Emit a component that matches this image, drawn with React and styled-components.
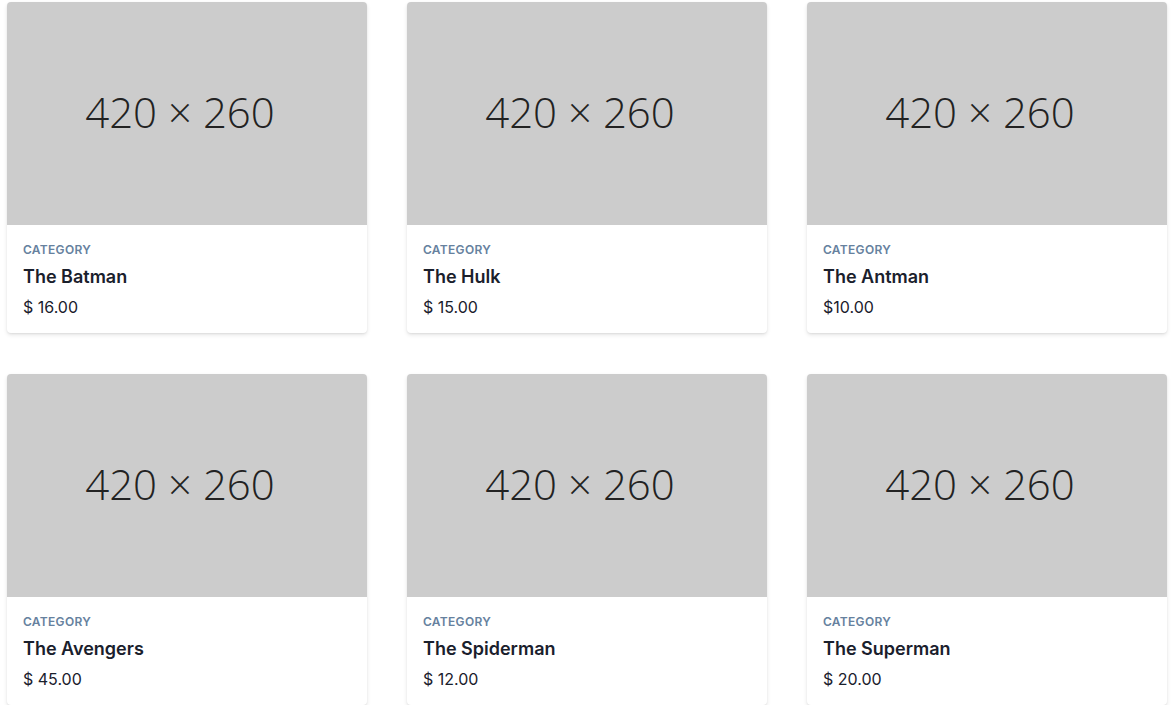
import React from 'react';
import styled, { createGlobalStyle } from 'styled-components';

const products = [
  { id: 1, name: 'The Batman', price: '$ 16.00' },
  { id: 2, name: 'The Hulk', price: '$ 15.00' },
  { id: 3, name: 'The Antman', price: '$10.00' },
  { id: 4, name: 'The Avengers', price: '$ 45.00' },
  { id: 5, name: 'The Spiderman', price: '$ 12.00' },
  { id: 6, name: 'The Superman', price: '$ 20.00' },
];

const App = () => {
  return (
    <>
      <GlobalStyle />
      <Grid>
        {products.map((product) => (
          <Card key={product.id}>
            <Placeholder>
              <PlaceholderText>420 × 260</PlaceholderText>
            </Placeholder>
            <Body>
              <Category>CATEGORY</Category>
              <Title>{product.name}</Title>
              <Price>{product.price}</Price>
            </Body>
          </Card>
        ))}
      </Grid>
    </>
  );
};

const GlobalStyle = createGlobalStyle`
  *, *::before, *::after {
    box-sizing: border-box;
  }
  body {
    margin: 0;
    background: #ffffff;
    font-family: Inter, "Liberation Sans", sans-serif;
    color: #1a202c;
  }
`;

const Grid = styled.div`
  display: grid;
  grid-template-columns: repeat(3, 360px);
  column-gap: 40px;
  row-gap: 41px;
  padding: 2px 0 0 7px;
`;

const Card = styled.div`
  width: 360px;
  background: #ffffff;
  border-radius: 4px;
  overflow: hidden;
  box-shadow: 0 2px 4px rgba(0, 0, 0, 0.1), 0 1px 2px rgba(0, 0, 0, 0.06);
`;

const Placeholder = styled.div`
  height: 223px;
  background: #cccccc;
  display: flex;
  align-items: center;
  justify-content: center;
  padding: 0 14px 4px 0;
`;

const PlaceholderText = styled.span`
  font-family: "Open Sans", "DejaVu Sans", sans-serif;
  font-weight: 300;
  font-size: 42px;
  color: #222222;
`;

const Body = styled.div`
  padding: 17px 16px 14px;
`;

const Category = styled.h3`
  margin: 0 0 5px;
  font-size: 12px;
  line-height: 16px;
  font-weight: 600;
  letter-spacing: 0.025em;
  color: #66819e;
`;

const Title = styled.h2`
  margin: 0;
  font-size: 18px;
  line-height: 28px;
  font-weight: 600;
  color: #1a202c;
`;

const Price = styled.p`
  margin: 4px 0 0;
  font-size: 16px;
  line-height: 24px;
  color: #1a202c;
`;

export default App;
